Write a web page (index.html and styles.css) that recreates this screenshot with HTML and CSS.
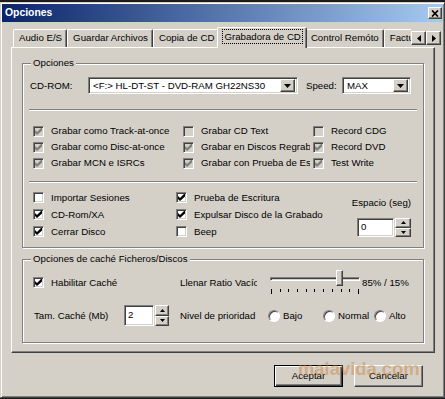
FILE: index.html
```html
<!DOCTYPE html>
<html lang="es">
<head>
  <meta charset="UTF-8" />
  <title>Opciones</title>
  <link rel="stylesheet" href="styles.css">
</head>
<body>
  <div class="window">
    <div class="titlebar">
      <span class="title">Opciones</span>
      <button class="close"><svg width="8" height="7" viewBox="0 0 8 7"><path d="M1 0.5L7 6.5M7 0.5L1 6.5" stroke="#000" stroke-width="1.7"/></svg></button>
    </div>

    <div class="tabrow">
      <div class="tablist">
        <div class="tab">Audio E/S</div>
        <div class="tab">Guardar Archivos</div>
        <div class="tab">Copia de CD</div>
        <div class="tab active"><span class="focus">Grabadora de CD</span></div>
        <div class="tab">Control Remóto</div>
        <div class="tab">Facturación</div>
      </div>
      <div class="tabscroll">
        <button class="raised"><svg width="4" height="7" viewBox="0 0 4 7"><path d="M4 0v7L0 3.5z"/></svg></button>
        <button class="raised"><svg width="4" height="7" viewBox="0 0 4 7"><path d="M0 0v7l4-3.5z"/></svg></button>
      </div>
    </div>

    <div class="panel">
      <fieldset class="group">
        <legend>Opciones</legend>
        <div class="drive-row">
          <span class="lbl-cdrom">CD-ROM:</span>
          <div class="combo combo-wide">
            <span class="combo-text">&lt;F:&gt; HL-DT-ST - DVD-RAM GH22NS30</span>
            <span class="drop raised"><svg width="7" height="4" viewBox="0 0 7 4"><path d="M0 0h7L3.5 4z"/></svg></span>
          </div>
          <span class="lbl-speed">Speed:</span>
          <div class="combo combo-small">
            <span class="combo-text">MAX</span>
            <span class="drop raised"><svg width="7" height="4" viewBox="0 0 7 4"><path d="M0 0h7L3.5 4z"/></svg></span>
          </div>
        </div>

        <div class="sep"></div>

        <div class="checks checks-write">
          <label class="cb"><span class="box off"><svg viewBox="0 0 7 7"><path d="M0 2l2 2 4-4h1v2.5L2 7 0 5z"/></svg></span>Grabar como Track-at-once</label>
          <label class="cb"><span class="box off"></span>Grabar CD Text</label>
          <label class="cb"><span class="box off"></span>Record CDG</label>
          <label class="cb"><span class="box off"><svg viewBox="0 0 7 7"><path d="M0 2l2 2 4-4h1v2.5L2 7 0 5z"/></svg></span>Grabar como Disc-at-once</label>
          <label class="cb"><span class="box off"><svg viewBox="0 0 7 7"><path d="M0 2l2 2 4-4h1v2.5L2 7 0 5z"/></svg></span>Grabar en Discos Regrabables</label>
          <label class="cb"><span class="box off"><svg viewBox="0 0 7 7"><path d="M0 2l2 2 4-4h1v2.5L2 7 0 5z"/></svg></span>Record DVD</label>
          <label class="cb"><span class="box off"><svg viewBox="0 0 7 7"><path d="M0 2l2 2 4-4h1v2.5L2 7 0 5z"/></svg></span>Grabar MCN e ISRCs</label>
          <label class="cb"><span class="box off"><svg viewBox="0 0 7 7"><path d="M0 2l2 2 4-4h1v2.5L2 7 0 5z"/></svg></span>Grabar con Prueba de Escritura</label>
          <label class="cb"><span class="box off"><svg viewBox="0 0 7 7"><path d="M0 2l2 2 4-4h1v2.5L2 7 0 5z"/></svg></span>Test Write</label>
        </div>

        <div class="sep"></div>

        <div class="checks checks-misc">
          <label class="cb"><span class="box"></span>Importar Sesiones</label>
          <label class="cb"><span class="box"><svg viewBox="0 0 7 7"><path d="M0 2l2 2 4-4h1v2.5L2 7 0 5z"/></svg></span>Prueba de Escritura</label>
          <div class="gap-field">
            <span>Espacio (seg)</span>
            <div class="spin spin-gap">
              <span class="spin-input">0</span>
              <span class="spin-btns">
                <span class="raised"><svg width="5" height="3" viewBox="0 0 5 3"><path d="M0 3h5L2.5 0z"/></svg></span>
                <span class="raised"><svg width="5" height="3" viewBox="0 0 5 3"><path d="M0 0h5L2.5 3z"/></svg></span>
              </span>
            </div>
          </div>
          <label class="cb"><span class="box"><svg viewBox="0 0 7 7"><path d="M0 2l2 2 4-4h1v2.5L2 7 0 5z"/></svg></span>CD-Rom/XA</label>
          <label class="cb"><span class="box"><svg viewBox="0 0 7 7"><path d="M0 2l2 2 4-4h1v2.5L2 7 0 5z"/></svg></span>Expulsar Disco de la Grabadora</label>
          <label class="cb"><span class="box"><svg viewBox="0 0 7 7"><path d="M0 2l2 2 4-4h1v2.5L2 7 0 5z"/></svg></span>Cerrar Disco</label>
          <label class="cb"><span class="box"></span>Beep</label>
        </div>
      </fieldset>

      <fieldset class="group group-cache">
        <legend>Opciones de caché Ficheros/Discos</legend>
        <div class="cache">
          <label class="cb cb-cache"><span class="box"><svg viewBox="0 0 7 7"><path d="M0 2l2 2 4-4h1v2.5L2 7 0 5z"/></svg></span>Habilitar Caché</label>
          <span class="lbl-ratio">Llenar Ratio Vacío</span>
          <div class="slider">
            <div class="track"></div>
            <div class="thumb"></div>
            <div class="ticks">
              <i class="long"></i><i></i><i></i><i></i><i></i><i></i><i></i><i></i><i></i><i></i><i class="long"></i>
            </div>
          </div>
          <span class="ratio-val">85% / 15%</span>

          <span class="lbl-size">Tam. Caché (Mb)</span>
          <div class="spin spin-size">
            <span class="spin-input">2</span>
            <span class="spin-btns">
              <span class="raised"><svg width="5" height="3" viewBox="0 0 5 3"><path d="M0 3h5L2.5 0z"/></svg></span>
              <span class="raised"><svg width="5" height="3" viewBox="0 0 5 3"><path d="M0 0h5L2.5 3z"/></svg></span>
            </span>
          </div>
          <span class="lbl-prio">Nivel de prioridad</span>
          <div class="radios">
            <label class="rb"><span class="dot"></span>Bajo</label>
            <label class="rb"><span class="dot"></span>Normal</label>
            <label class="rb"><span class="dot"></span>Alto</label>
          </div>
        </div>
      </fieldset>
    </div>

    <div class="actions">
      <button class="btn btn-default">Aceptar</button>
      <button class="btn">Cancelar</button>
    </div>

    <div class="watermark">malavida.com</div>
  </div>
</body>
</html>
```

FILE: styles.css
```css
* {
  box-sizing: border-box;
}
body {
  margin: 0;
  background: #1c1c1c;
  font-family: "Liberation Sans", Arial, sans-serif;
  font-size: 9.7px;
  line-height: 12px;
  color: #000;
}
button {
  font: inherit;
  color: inherit;
  padding: 0;
}
.raised {
  background: #d4d0c8;
  border: 1px solid;
  border-color: #fff #404040 #404040 #fff;
  box-shadow: inset -1px -1px #808080;
  display: flex;
  align-items: center;
  justify-content: center;
}

/* ventana */
.window {
  position: relative;
  width: 445px;
  height: 396px;
  margin-top: 2px;
  padding: 1px;
  background: #d4d0c8;
  border: 1px solid;
  border-color: #d4d0c8 #404040 #404040 #d4d0c8;
  box-shadow: inset 1px 1px #fff, inset -1px -1px #808080;
}
.titlebar {
  height: 18px;
  display: flex;
  align-items: center;
  justify-content: space-between;
  padding: 0 1px 0 3px;
  background: linear-gradient(to right, #0a246a, #a6caf0);
}
.title {
  color: #fff;
  font-weight: bold;
  font-size: 10.4px;
}
.close {
  width: 14px;
  height: 12px;
  background: #d4d0c8;
  border: 1px solid;
  border-color: #fff #404040 #404040 #fff;
  box-shadow: inset -1px -1px #808080;
  display: flex;
  align-items: center;
  justify-content: center;
}

/* pestañas */
.tabrow {
  position: relative;
  z-index: 1;
  display: flex;
  height: 21px;
  margin-top: 5px;
  margin-bottom: -1px;
  padding: 0 2px 0 11px;
}
.tablist {
  flex: 1;
  min-width: 0;
  display: flex;
  align-items: flex-end;
  overflow: hidden;
}
.tab {
  flex: none;
  position: relative;
  height: 18px;
  margin-bottom: 1px;
  padding: 0 4px 0 5px;
  line-height: 16px;
  white-space: nowrap;
  background: #d4d0c8;
  border-top: 1px solid #fff;
  border-left: 1px solid #fff;
  border-right: 1px solid #404040;
  border-radius: 2px 2px 0 0;
  box-shadow: inset -1px 0 #808080;
}
.tab.active {
  z-index: 2;
  height: 21px;
  margin: 0 -2px;
  padding: 1px 3px 0 4px;
  line-height: 12px;
}
.focus {
  display: inline-block;
  padding: 2px 2px 1px;
  outline: 1px dotted #000;
  outline-offset: -1px;
}
.tabscroll {
  display: flex;
  height: 14px;
  margin-top: 4px;
}
.tabscroll button {
  width: 15px;
  height: 14px;
}

/* panel */
.panel {
  height: 306px;
  margin: 0 8px 0 9px;
  padding: 9px 10px 0;
  border: 1px solid;
  border-color: #fff #404040 #404040 #fff;
  box-shadow: inset -1px -1px #808080;
}
.group {
  margin: 0;
  min-width: 0;
  padding: 0 6px 7px;
  border: 1px solid #808080;
  box-shadow: inset 1px 1px #fff, 1px 1px #fff;
}
.group legend {
  margin-left: 2px;
  padding: 0 2px;
  background: #d4d0c8;
  line-height: 12px;
}
.group-cache {
  margin-top: 5px;
  padding-bottom: 16px;
}

.drive-row {
  display: flex;
  align-items: center;
  height: 17px;
  margin-top: 8px;
}
.lbl-cdrom {
  width: 58px;
  margin-left: 1px;
}
.lbl-speed {
  width: 36px;
  margin-left: 8px;
}
.combo {
  height: 17px;
  display: flex;
  align-items: center;
  padding: 0 2px 0 4px;
  background: #fff;
  border: 1px solid;
  border-color: #808080 #fff #fff #808080;
  box-shadow: inset 1px 1px #404040, inset -1px -1px #d4d0c8;
}
.combo-wide {
  width: 210px;
}
.combo-small {
  width: 69px;
}
.combo-text {
  flex: 1;
  white-space: nowrap;
  overflow: hidden;
}
.drop {
  width: 15px;
  height: 13px;
}

.sep {
  height: 2px;
  border-top: 1px solid #808080;
  border-bottom: 1px solid #fff;
}
.drive-row + .sep {
  margin-top: 15px;
}
.checks + .sep {
  margin-top: 10px;
}

.checks {
  display: grid;
  margin-left: 4px;
}
.checks-write {
  grid-template-columns: 150px 130px 1fr;
  grid-auto-rows: 16px;
  margin-top: 12px;
}
.checks-misc {
  grid-template-columns: 143px 150px 1fr;
  grid-auto-rows: 17px;
  margin-top: 6px;
}
.cb {
  display: flex;
  align-items: center;
  gap: 7px;
  min-width: 0;
  margin-right: 3px;
  overflow: hidden;
  white-space: nowrap;
}
.box {
  flex: none;
  width: 11px;
  height: 11px;
  display: flex;
  align-items: center;
  justify-content: center;
  background: #fff;
  border: 1px solid;
  border-color: #808080 #fff #fff #808080;
  box-shadow: inset 1px 1px #404040, inset -1px -1px #d4d0c8;
}
.box svg {
  width: 7px;
  height: 7px;
  fill: #000;
}
.box.off {
  background: #d4d0c8;
}
.box.off svg {
  fill: #808080;
}

.gap-field {
  grid-column: 3;
  grid-row: 1 / span 3;
  display: flex;
  flex-direction: column;
  align-items: flex-end;
  padding: 8px 6px 0 0;
}
.spin {
  display: flex;
}
.spin-gap {
  height: 19px;
  margin-top: 9px;
}
.spin-gap .spin-input {
  width: 37px;
}
.spin-gap .spin-btns {
  width: 16px;
}
.spin-input {
  padding: 2px 0 0 3px;
  background: #fff;
  border: 1px solid;
  border-color: #808080 #fff #fff #808080;
  box-shadow: inset 1px 1px #404040, inset -1px -1px #d4d0c8;
}
.spin-btns {
  display: flex;
  flex-direction: column;
  margin-left: 1px;
}
.spin-btns span {
  flex: 1;
}

/* caché */
.cache {
  display: grid;
  grid-template-columns: 91px 56px 88px 94px 1fr;
  grid-template-rows: 25px 21px;
  row-gap: 10px;
  align-items: center;
  margin: 5px 0 0 4px;
}
.cb-cache {
  grid-column: 1 / span 2;
}
.lbl-ratio {
  width: 77px;
  overflow: hidden;
  white-space: nowrap;
}
.slider {
  position: relative;
  height: 25px;
  padding-left: 2px;
}
.track {
  width: 90px;
  height: 4px;
  margin-top: 7px;
  border: 1px solid;
  border-color: #808080 #fff #fff #808080;
  box-shadow: inset 1px 1px #404040;
}
.thumb {
  position: absolute;
  left: 68px;
  top: 0;
  width: 7px;
  height: 16px;
  background: #d4d0c8;
  border: 1px solid;
  border-color: #fff #404040 #404040 #fff;
  box-shadow: inset -1px -1px #808080;
}
.ticks {
  display: flex;
  justify-content: space-between;
  align-items: flex-start;
  width: 90px;
  height: 5px;
  margin-top: 8px;
  padding: 0 1px;
}
.ticks i {
  width: 1px;
  height: 3px;
  background: #000;
}
.ticks i.long {
  height: 5px;
}
.lbl-size {
  padding-left: 1px;
}
.spin-size {
  height: 21px;
}
.spin-size .spin-input {
  width: 30px;
  padding-top: 3px;
}
.spin-size .spin-btns {
  width: 14px;
}
.radios {
  grid-column: 4 / span 2;
  display: grid;
  grid-template-columns: 55px 51px auto;
  align-items: center;
}
.rb {
  display: flex;
  align-items: center;
  gap: 3px;
}
.dot {
  width: 12px;
  height: 12px;
  border-radius: 50%;
  background: #fff;
  border: 1px solid;
  border-color: #808080 #fff #fff #808080;
  box-shadow: inset 1px 1px #404040;
}

/* botones */
.actions {
  display: flex;
  justify-content: flex-end;
  gap: 11px;
  margin-top: 12px;
  padding-right: 20px;
}
.btn {
  width: 69px;
  height: 22px;
  background: #d4d0c8;
  border: 1px solid;
  border-color: #fff #404040 #404040 #fff;
  box-shadow: inset -1px -1px #808080;
}
.btn-default {
  border-color: #000;
  box-shadow: inset 1px 1px #fff, inset -1px -1px #404040, inset -2px -2px #808080;
}

.watermark {
  position: absolute;
  left: 297px;
  top: 357px;
  font-weight: bold;
  font-size: 18.4px;
  line-height: 18.4px;
  color: rgba(205, 125, 45, 0.45);
  pointer-events: none;
}
```
